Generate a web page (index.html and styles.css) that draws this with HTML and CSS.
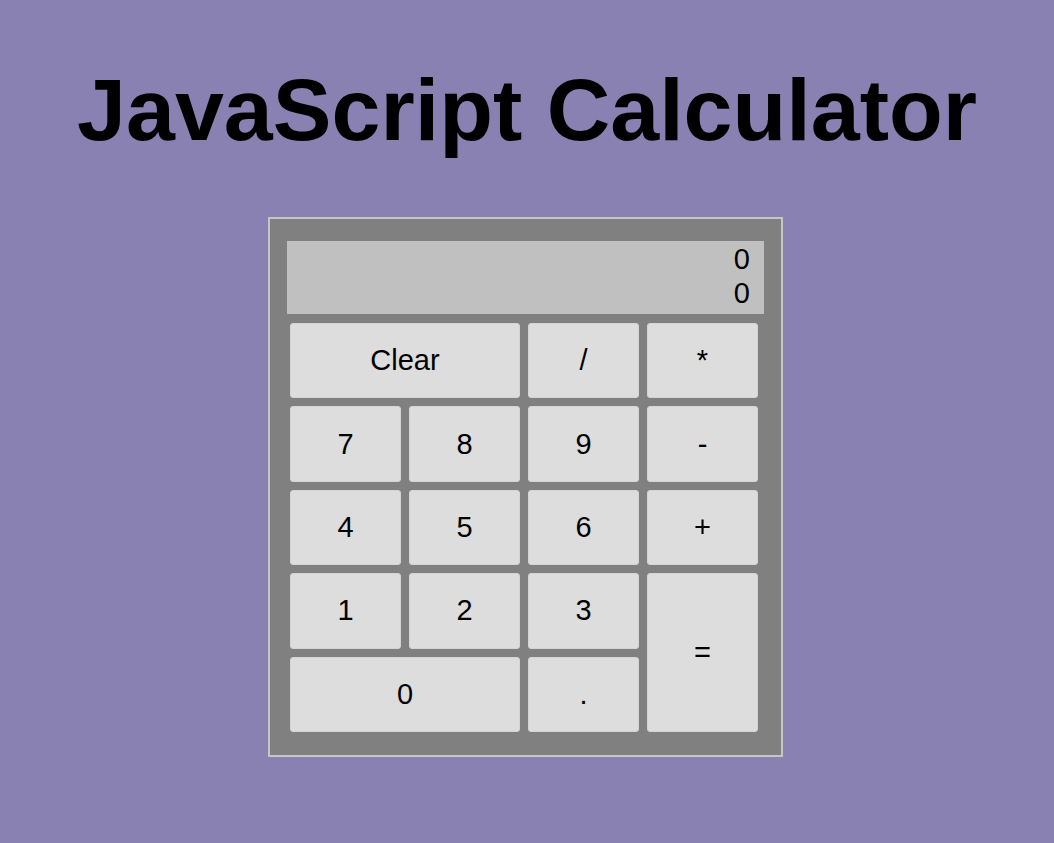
FILE: index.html
```html
<!DOCTYPE html>
<html lang="en">
<head>
<meta charset="utf-8">
<title>JavaScript Calculator</title>
<link rel="stylesheet" href="styles.css">
</head>
<body>
<h1 class="title">JavaScript Calculator</h1>
<div class="calc">
  <div class="display">
    <div class="line">0</div>
    <div class="line">0</div>
  </div>
  <div class="keys">
    <button class="key span2">Clear</button>
    <button class="key">/</button>
    <button class="key">*</button>
    <button class="key">7</button>
    <button class="key">8</button>
    <button class="key">9</button>
    <button class="key">-</button>
    <button class="key">4</button>
    <button class="key">5</button>
    <button class="key">6</button>
    <button class="key">+</button>
    <button class="key">1</button>
    <button class="key">2</button>
    <button class="key">3</button>
    <button class="key tall">=</button>
    <button class="key span2">0</button>
    <button class="key">.</button>
  </div>
</div>
</body>
</html>
```
FILE: styles.css
```css
html, body {
  margin: 0;
  padding: 0;
}
body {
  background: #8881b2;
  font-family: "Liberation Sans", Arial, sans-serif;
  color: #000;
}
.title {
  margin: 59px 0 0;
  text-align: center;
  font-size: 88px;
  font-weight: bold;
  line-height: 101px;
}
.calc {
  width: 477px;
  margin: 57px 0 0 calc(50% - 259px);
  border: 2px solid #c6c6c6;
  background: #808080;
  padding: 22px 17px 23px;
}
.display {
  background: #c0c0c0;
  height: 73px;
  box-sizing: border-box;
  padding: 1px 14px 0 0;
  text-align: right;
  font-size: 29px;
}
.line {
  line-height: 34px;
}
.keys {
  margin: 9px 0 0 3px;
  display: grid;
  grid-template-columns: repeat(4, 111px);
  grid-auto-rows: 75.4px;
  gap: 8px;
}
.key {
  background: #dddddd;
  border: 1px solid #d4d4d4;
  border-radius: 3px;
  font-family: "Liberation Sans", Arial, sans-serif;
  font-size: 29px;
  color: #000;
  padding: 0;
}
.span2 {
  grid-column: span 2;
}
.tall {
  grid-row: span 2;
}
```
